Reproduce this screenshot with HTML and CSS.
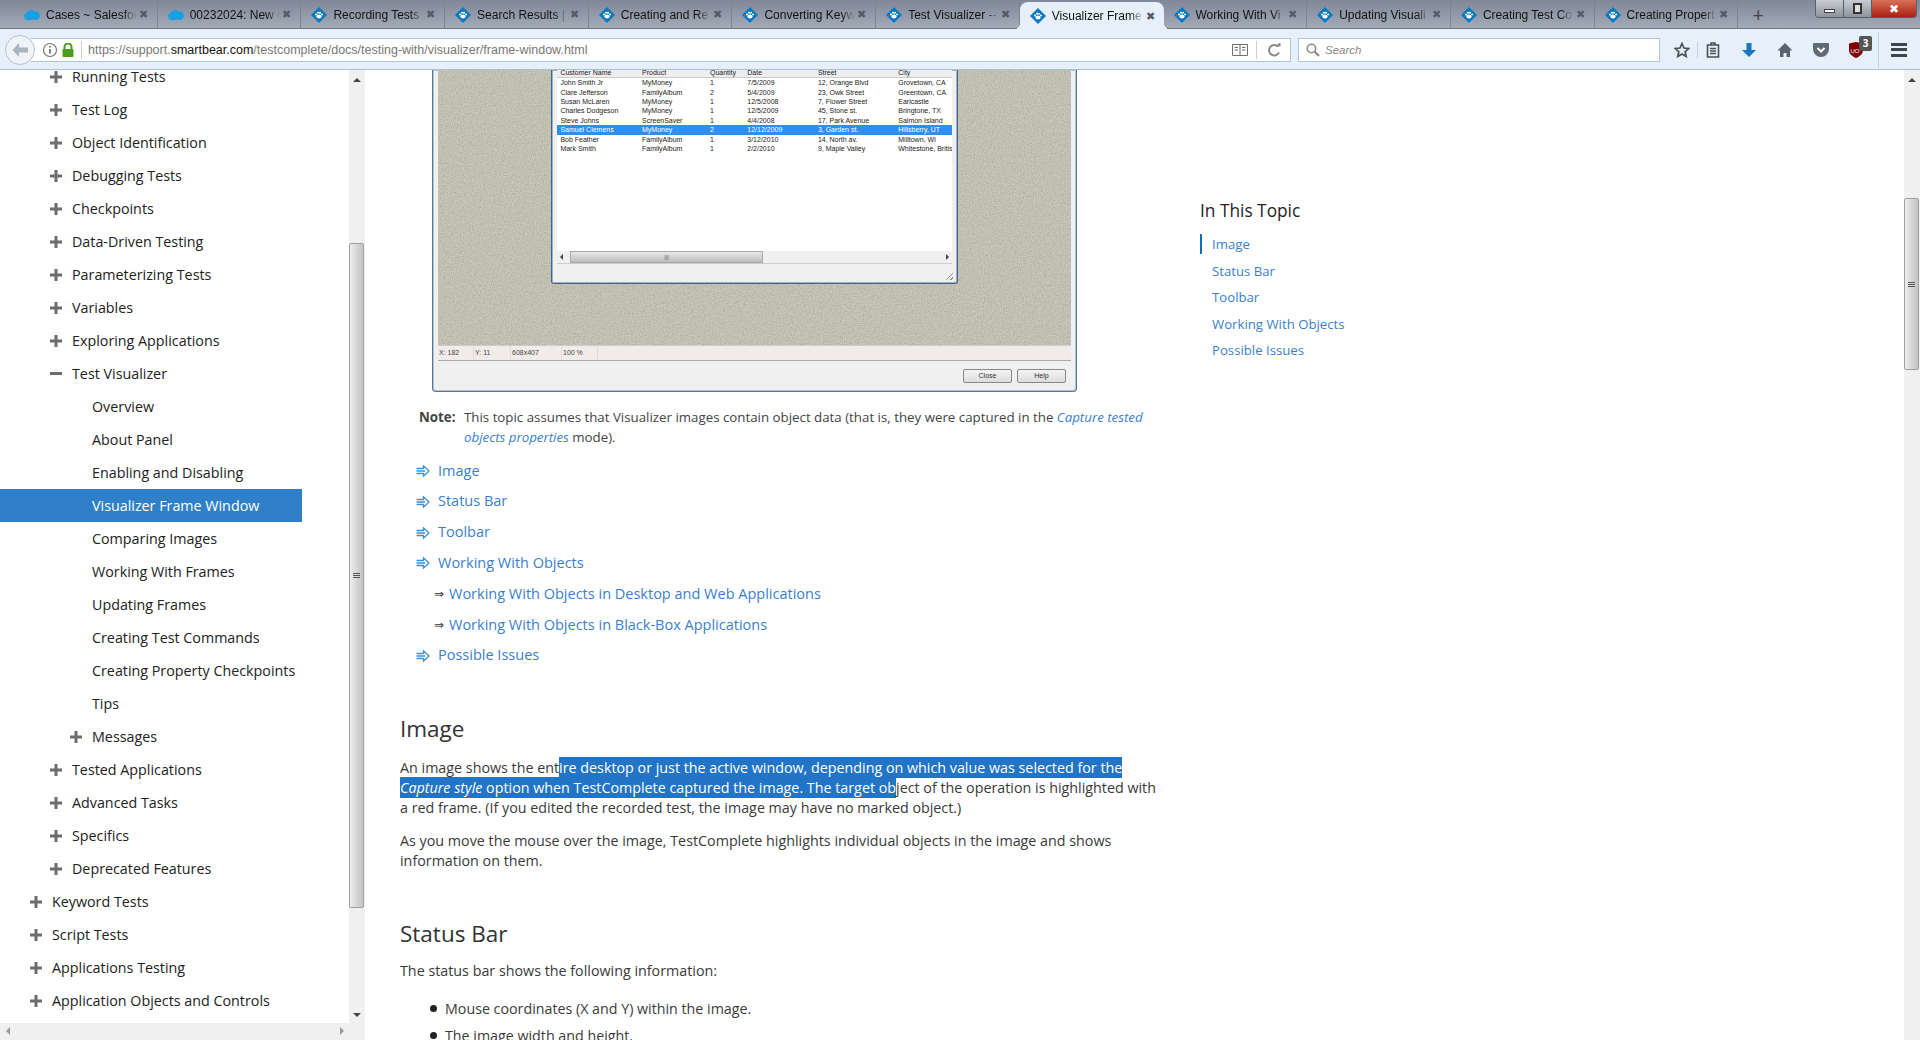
FILE: index.html

```html
<!DOCTYPE html>
<html lang="en">
<head>
    <meta charset="UTF-8">
    <title>Visualizer Frame Window</title>
    <link rel="stylesheet" href="styles.css">
</head>
<body>
<svg class="defs" width="0" height="0">
    <defs>
        <symbol id="bear" viewBox="0 0 16 16">
            <path d="M8 0L16 8L8 16L0 8Z" fill="#0b78c2"/>
            <ellipse cx="8" cy="9.6" rx="2.6" ry="2" fill="#fff"/>
            <circle cx="5" cy="7.6" r="1" fill="#fff"/>
            <circle cx="7" cy="5.8" r="1" fill="#fff"/>
            <circle cx="9" cy="5.8" r="1" fill="#fff"/>
            <circle cx="11" cy="7.6" r="1" fill="#fff"/>
        </symbol>
        <symbol id="cloud" viewBox="0 0 18 14">
            <path d="M5 13C1.5 13 0 11 0 8.5 0 6.5 1.5 5 3 4.6 4 2 6 1 8 1c2 0 3 .8 4 2 3.5-.8 6 1.5 6 4.5 0 3-2 5-5 5-1 0-2-.2-3-.6C9 12.8 7 13.2 5 13Z" fill="#1b9fe3"/>
        </symbol>
        <symbol id="plus" viewBox="0 0 12 12">
            <path d="M4.5 0h3v4.5H12v3H7.5V12h-3V7.5H0v-3h4.5Z" fill="#6d6d6d"/>
        </symbol>
        <symbol id="arrow" viewBox="0 0 14 12">
            <path d="M.5 3.5H7.5V.8L13 6 7.5 11.2V8.5H.5M.5 6H9" fill="none" stroke="#3f8fd2" stroke-width="1.3"/>
        </symbol>
    </defs>
</svg>

<header class="chrome">
    <div class="tabbar">
        <div class="tab"><svg class="fav cloud"><use href="#cloud"/></svg><span class="tab-title">Cases ~ Salesfor</span><span class="tab-x">&#10006;</span></div>
        <div class="tab"><svg class="fav cloud"><use href="#cloud"/></svg><span class="tab-title">00232024: New C</span><span class="tab-x">&#10006;</span></div>
        <div class="tab"><svg class="fav"><use href="#bear"/></svg><span class="tab-title">Recording Tests</span><span class="tab-x">&#10006;</span></div>
        <div class="tab"><svg class="fav"><use href="#bear"/></svg><span class="tab-title">Search Results |</span><span class="tab-x">&#10006;</span></div>
        <div class="tab"><svg class="fav"><use href="#bear"/></svg><span class="tab-title">Creating and Re</span><span class="tab-x">&#10006;</span></div>
        <div class="tab"><svg class="fav"><use href="#bear"/></svg><span class="tab-title">Converting Keyw</span><span class="tab-x">&#10006;</span></div>
        <div class="tab"><svg class="fav"><use href="#bear"/></svg><span class="tab-title">Test Visualizer --</span><span class="tab-x">&#10006;</span></div>
        <div class="tab tab-active"><svg class="fav"><use href="#bear"/></svg><span class="tab-title">Visualizer Frame</span><span class="tab-x">&#10006;</span></div>
        <div class="tab"><svg class="fav"><use href="#bear"/></svg><span class="tab-title">Working With Vi</span><span class="tab-x">&#10006;</span></div>
        <div class="tab"><svg class="fav"><use href="#bear"/></svg><span class="tab-title">Updating Visuali</span><span class="tab-x">&#10006;</span></div>
        <div class="tab"><svg class="fav"><use href="#bear"/></svg><span class="tab-title">Creating Test Co</span><span class="tab-x">&#10006;</span></div>
        <div class="tab"><svg class="fav"><use href="#bear"/></svg><span class="tab-title">Creating Propert</span><span class="tab-x">&#10006;</span></div>
        <div class="new-tab">+</div>
        <div class="win-buttons">
            <span class="win-btn win-min"><i></i></span>
            <span class="win-btn win-max"><i></i></span>
            <span class="win-btn win-close">&#10006;</span>
        </div>
    </div>
    <div class="navbar">
        <div class="back">
            <svg width="18" height="16" viewBox="0 0 18 16"><path d="M8 1L1.5 8 8 15V10.5H17V5.5H8Z" fill="#a9b4bf"/></svg>
        </div>
        <div class="urlbar">
            <svg class="info" width="16" height="16" viewBox="0 0 16 16"><circle cx="8" cy="8" r="6.5" fill="none" stroke="#777" stroke-width="1.2"/><path d="M8 7v4.5M8 4v1.6" stroke="#666" stroke-width="1.6"/></svg>
            <svg class="lock" width="12" height="14" viewBox="0 0 12 14"><path d="M2.5 6V4a3.5 3.5 0 0 1 7 0v2" fill="none" stroke="#4c9e1e" stroke-width="2"/><rect x=".5" y="6" width="11" height="8" rx="1" fill="#4c9e1e"/></svg>
            <span class="url">https://support.<b>smartbear.com</b>/testcomplete/docs/testing-with/visualizer/frame-window.html</span>
            <svg class="reader" width="16" height="12" viewBox="0 0 16 12"><path d="M.5.5h15v11h-15zM8 .5v11M2.5 3.5h3.5M2.5 6h3.5M10 3.5h3.5M10 6h3.5" fill="none" stroke="#6f6f6f"/></svg>
            <span class="url-sep"></span>
            <svg class="reload" width="14" height="14" viewBox="0 0 14 14"><path d="M12 9.5A5.2 5.2 0 1 1 11 3.5" fill="none" stroke="#8a8a8a" stroke-width="2"/><path d="M8 3.5h5.5V-1Z" fill="#8a8a8a"/></svg>
        </div>
        <div class="searchbar">
            <svg width="14" height="14" viewBox="0 0 14 14"><circle cx="5.5" cy="5.5" r="4.2" fill="none" stroke="#8a8a8a" stroke-width="1.6"/><path d="M8.5 8.5L13 13" stroke="#8a8a8a" stroke-width="2.2"/></svg>
            <span>Search</span>
        </div>
        <div class="nav-icons">
            <svg class="ic-star" width="16" height="16" viewBox="0 0 16 16"><path d="M8 1.5l2 4.5 4.8.5-3.6 3.2 1 4.8L8 12.1 3.8 14.5l1-4.8L1.2 6.5 6 6Z" fill="none" stroke="#4a4f55" stroke-width="1.7"/></svg>
            <span class="nav-sep"></span>
            <svg class="ic-clip" width="14" height="16" viewBox="0 0 14 16"><path d="M1.5 3h11v12h-11zM5 3V1h4v2M4 6.5h6M4 9h6M4 11.5h6" fill="none" stroke="#4a4f55" stroke-width="1.6"/></svg>
            <svg class="ic-down" width="16" height="16" viewBox="0 0 16 16"><path d="M5.5 1h5v7H15l-7 7-7-7h4.5Z" fill="#1a76bd"/></svg>
            <svg class="ic-home" width="16" height="16" viewBox="0 0 16 16"><path d="M8 1L.5 8.5H3V15h3.5v-4h3v4H13V8.5h2.5Z" fill="#5a636b"/></svg>
            <svg class="ic-pocket" width="16" height="14" viewBox="0 0 16 14"><path d="M1 0h14a1 1 0 0 1 1 1v5a8 8 0 0 1-16 0V1a1 1 0 0 1 1-1Z" fill="#5f6b75"/><path d="M4.5 5L8 8.5 11.5 5" fill="none" stroke="#fff" stroke-width="2"/></svg>
            <span class="ublock">
                <svg width="14" height="16" viewBox="0 0 14 16"><path d="M0 1.5L7 0l7 1.5V8c0 4-3.5 6.5-7 8-3.5-1.5-7-4-7-8Z" fill="#800000"/><text x="1.5" y="10.5" font-size="6" font-family="Liberation Sans" fill="#fff">UO</text></svg>
                <span class="ub-badge">3</span>
            </span>
            <span class="nav-sep-tall"></span>
            <span class="burger"><i></i><i></i><i></i></span>
        </div>
    </div>
</header>

<div class="page">
    <nav class="sidebar">
        <ul class="tree">
            <li class="lvl1"><svg class="tg"><use href="#plus"/></svg>Running Tests</li>
            <li class="lvl1"><svg class="tg"><use href="#plus"/></svg>Test Log</li>
            <li class="lvl1"><svg class="tg"><use href="#plus"/></svg>Object Identification</li>
            <li class="lvl1"><svg class="tg"><use href="#plus"/></svg>Debugging Tests</li>
            <li class="lvl1"><svg class="tg"><use href="#plus"/></svg>Checkpoints</li>
            <li class="lvl1"><svg class="tg"><use href="#plus"/></svg>Data-Driven Testing</li>
            <li class="lvl1"><svg class="tg"><use href="#plus"/></svg>Parameterizing Tests</li>
            <li class="lvl1"><svg class="tg"><use href="#plus"/></svg>Variables</li>
            <li class="lvl1"><svg class="tg"><use href="#plus"/></svg>Exploring Applications</li>
            <li class="lvl1"><span class="tg minus"></span>Test Visualizer</li>
            <li class="lvl2">Overview</li>
            <li class="lvl2">About Panel</li>
            <li class="lvl2">Enabling and Disabling</li>
            <li class="lvl2 selected">Visualizer Frame Window</li>
            <li class="lvl2">Comparing Images</li>
            <li class="lvl2">Working With Frames</li>
            <li class="lvl2">Updating Frames</li>
            <li class="lvl2">Creating Test Commands</li>
            <li class="lvl2">Creating Property Checkpoints</li>
            <li class="lvl2">Tips</li>
            <li class="lvl2 has-toggle"><svg class="tg"><use href="#plus"/></svg>Messages</li>
            <li class="lvl1"><svg class="tg"><use href="#plus"/></svg>Tested Applications</li>
            <li class="lvl1"><svg class="tg"><use href="#plus"/></svg>Advanced Tasks</li>
            <li class="lvl1"><svg class="tg"><use href="#plus"/></svg>Specifics</li>
            <li class="lvl1"><svg class="tg"><use href="#plus"/></svg>Deprecated Features</li>
            <li class="lvl0"><svg class="tg"><use href="#plus"/></svg>Keyword Tests</li>
            <li class="lvl0"><svg class="tg"><use href="#plus"/></svg>Script Tests</li>
            <li class="lvl0"><svg class="tg"><use href="#plus"/></svg>Applications Testing</li>
            <li class="lvl0"><svg class="tg"><use href="#plus"/></svg>Application Objects and Controls</li>
        </ul>
        <div class="side-vscroll">
            <span class="arrow-up"></span>
            <span class="side-thumb"><i></i><i></i><i></i></span>
            <span class="arrow-down"></span>
        </div>
        <div class="side-hscroll">
            <span class="arrow-left"></span>
            <span class="arrow-right"></span>
        </div>
    </nav>

    <main class="content">
        <div class="shot">
            <div class="shot-canvas">
                <svg class="noise" width="100%" height="100%">
                    <filter id="grain"><feTurbulence type="fractalNoise" baseFrequency="0.9" numOctaves="2" seed="4"/><feColorMatrix values="0 0 0 0 0.38  0 0 0 0 0.37  0 0 0 0 0.32  0 0 0 1.6 -0.55"/></filter>
                    <rect width="100%" height="100%" filter="url(#grain)"/>
                </svg>
                <div class="shot-win">
                    <div class="shot-list">
                        <div class="shot-row shot-head"><span>Customer Name</span><span>Product</span><span>Quantity</span><span>Date</span><span>Street</span><span>City</span></div>
                        <div class="shot-row"><span>John Smith Jr</span><span>MyMoney</span><span>1</span><span>7/5/2009</span><span>12, Orange Blvd</span><span>Grovetown, CA</span></div>
                        <div class="shot-row"><span>Clare Jefferson</span><span>FamilyAlbum</span><span>2</span><span>5/4/2009</span><span>23, Owk Street</span><span>Greentown, CA</span></div>
                        <div class="shot-row"><span>Susan McLaren</span><span>MyMoney</span><span>1</span><span>12/5/2008</span><span>7, Flower Street</span><span>Earlcastle</span></div>
                        <div class="shot-row"><span>Charles Dodgeson</span><span>MyMoney</span><span>1</span><span>12/5/2009</span><span>45, Stone st.</span><span>Bringtone, TX</span></div>
                        <div class="shot-row"><span>Steve Johns</span><span>ScreenSaver</span><span>1</span><span>4/4/2008</span><span>17, Park Avenue</span><span>Salmon Island</span></div>
                        <div class="shot-row shot-sel"><span>Samuel Clemens</span><span>MyMoney</span><span>2</span><span>12/12/2009</span><span>3, Garden st.</span><span>Hillsberry, UT</span></div>
                        <div class="shot-row"><span>Bob Feather</span><span>FamilyAlbum</span><span>1</span><span>3/12/2010</span><span>14, North av.</span><span>Milltown, WI</span></div>
                        <div class="shot-row"><span>Mark Smith</span><span>FamilyAlbum</span><span>1</span><span>2/2/2010</span><span>9, Maple Valley</span><span>Whitestone, Britis</span></div>
                    </div>
                    <div class="shot-hscroll"><span class="shot-l"></span><span class="shot-thumb">|||</span><span class="shot-r"></span></div>
                    <div class="shot-grip"></div>
                </div>
            </div>
            <div class="shot-status"><span class="st1">X: 182</span><span class="st2">Y: 11</span><span class="st3">608x407</span><span class="st4">100 %</span><span class="st5"></span></div>
            <div class="shot-buttons"><span class="shot-btn">Close</span><span class="shot-btn">Help</span></div>
        </div>

        <div class="note">
            <b class="note-label">Note:</b>
            <p>This topic assumes that Visualizer images contain object data (that is, they were captured in the <a><i>Capture tested objects properties</i></a> mode).</p>
        </div>

        <ul class="toc">
            <li><svg class="toc-arrow"><use href="#arrow"/></svg><a>Image</a></li>
            <li><svg class="toc-arrow"><use href="#arrow"/></svg><a>Status Bar</a></li>
            <li><svg class="toc-arrow"><use href="#arrow"/></svg><a>Toolbar</a></li>
            <li><svg class="toc-arrow"><use href="#arrow"/></svg><a>Working With Objects</a></li>
            <li class="toc-sub"><span class="dbl">&#8658;</span><a>Working With Objects in Desktop and Web Applications</a></li>
            <li class="toc-sub"><span class="dbl">&#8658;</span><a>Working With Objects in Black-Box Applications</a></li>
            <li><svg class="toc-arrow"><use href="#arrow"/></svg><a>Possible Issues</a></li>
        </ul>

        <h2 class="heading h-image">Image</h2>
        <p class="para first">An image shows the ent<span class="hl">ire desktop or just the active window, depending on which value was selected for the <i>Capture style</i> option when TestComplete captured the image. The target ob</span>ject of the operation is highlighted with a red frame. (If you edited the recorded test, the image may have no marked object.)</p>
        <p class="para">As you move the mouse over the image, TestComplete highlights individual objects in the image and shows information on them.</p>

        <h2 class="heading h-status">Status Bar</h2>
        <p class="para">The status bar shows the following information:</p>
        <ul class="bullets">
            <li>Mouse coordinates (X and Y) within the image.</li>
            <li>The image width and height.</li>
        </ul>
    </main>

    <aside class="topic">
        <h3>In This Topic</h3>
        <ul>
            <li class="on">Image</li>
            <li>Status Bar</li>
            <li>Toolbar</li>
            <li>Working With Objects</li>
            <li>Possible Issues</li>
        </ul>
    </aside>

    <div class="page-scroll">
        <span class="arrow-up"></span>
        <span class="page-thumb"><i></i><i></i><i></i></span>
    </div>
</div>
</body>
</html>
```

FILE: styles.css

```css
* {
    box-sizing: border-box;
}

html, body {
    margin: 0;
    height: 100%;
    overflow: hidden;
}

body {
    font-family: "Open Sans", "Noto Sans", Arial, sans-serif;
    font-size: 14px;
    color: #333;
    background: #fff;
}

.defs {
    position: absolute;
}

ul {
    list-style: none;
    margin: 0;
    padding: 0;
}

/* browser chrome */

.chrome {
    height: 70px;
    display: flex;
    flex-direction: column;
}

.tabbar {
    height: 29px;
    flex-shrink: 0;
    display: flex;
    padding-left: 14px;
    background: linear-gradient(#7f8798, #a3abb8);
    border-bottom: 1px solid #6f7783;
    position: relative;
}

.tab {
    width: 143.7px;
    height: 29px;
    padding: 0 9px 0 10px;
    display: flex;
    align-items: center;
    font-family: "Liberation Sans", Arial, sans-serif;
    font-size: 12px;
    color: #111;
    border-right: 1px solid #7d8592;
    flex-shrink: 0;
    position: relative;
}

.tab-active {
    background: #e6f0fa;
    border-radius: 8px 8px 0 0;
    border-right: 0;
    margin-top: 2px;
    height: 28px;
}

.tab-active::before, .tab-active::after {
    content: "";
    position: absolute;
    bottom: 0;
    width: 8px;
    height: 8px;
}

.tab-active::before {
    left: -8px;
    background: radial-gradient(circle at 0 0, transparent 8px, #e6f0fa 8.5px);
}

.tab-active::after {
    right: -8px;
    background: radial-gradient(circle at 100% 0, transparent 8px, #e6f0fa 8.5px);
}

.fav {
    width: 16px;
    height: 16px;
    flex-shrink: 0;
    margin-right: 6px;
}

.tab-title {
    flex: 1;
    overflow: hidden;
    white-space: nowrap;
    -webkit-mask-image: linear-gradient(to right, #000 85%, transparent 100%);
    mask-image: linear-gradient(to right, #000 85%, transparent 100%);
}

.tab-x {
    font-size: 11px;
    color: #555b66;
    margin-left: 2px;
    flex-shrink: 0;
}

.new-tab {
    width: 40px;
    text-align: center;
    font-size: 20px;
    line-height: 29px;
    color: #444;
}

.win-buttons {
    position: absolute;
    top: 0;
    left: 1815px;
    width: 102px;
    height: 18px;
    display: flex;
    border: 1px solid #5b6068;
    border-top: 0;
    border-radius: 0 0 4px 4px;
    overflow: hidden;
}

.win-btn {
    width: 28px;
    display: flex;
    align-items: center;
    justify-content: center;
    background: linear-gradient(#c9cdd3, #8d939c);
    border-right: 1px solid #5b6068;
}

.win-min i {
    width: 11px;
    height: 4px;
    margin-top: 5px;
    background: #fff;
    border: 1px solid #444;
}

.win-max i {
    width: 9px;
    height: 11px;
    border: 2px solid #333;
    background: #ddd;
}

.win-close {
    flex: 1;
    border: 0;
    color: #fff;
    font-size: 12px;
    background: linear-gradient(#d9705a, #a82010);
}

.navbar {
    height: 41px;
    flex-shrink: 0;
    display: flex;
    align-items: center;
    background: #e6f0fa;
    border-bottom: 1px solid #a9bfd6;
    padding-left: 5px;
    padding-top: 1px;
}

.back {
    width: 30px;
    height: 30px;
    border-radius: 50%;
    border: 1px solid #b3c0cd;
    background: #eef3f8;
    display: flex;
    align-items: center;
    justify-content: center;
    z-index: 1;
    flex-shrink: 0;
}

.urlbar {
    margin-left: -4px;
    width: 1260px;
    height: 24px;
    background: #fff;
    border: 1px solid #b4c4d6;
    border-left: 0;
    display: flex;
    align-items: center;
    padding-left: 11px;
    flex-shrink: 0;
}

.lock {
    margin: 0 7px 0 4px;
}

.url {
    flex: 1;
    padding-left: 6px;
    border-left: 1px solid #ccd;
    font-family: "Liberation Sans", Arial, sans-serif;
    font-size: 12.5px;
    color: #777;
    line-height: 18px;
}

.url b {
    font-weight: normal;
    color: #111;
}

.reader {
    margin-right: 8px;
}

.url-sep {
    width: 1px;
    height: 18px;
    background: #ccd;
    margin-right: 10px;
}

.reload {
    margin-right: 9px;
}

.searchbar {
    margin-left: 7px;
    width: 362px;
    height: 24px;
    background: #fff;
    border: 1px solid #b4c4d6;
    display: flex;
    align-items: center;
    gap: 5px;
    padding-left: 7px;
    font-family: "Liberation Sans", Arial, sans-serif;
    font-size: 11.5px;
    font-style: italic;
    color: #888;
    flex-shrink: 0;
}

.nav-icons {
    flex: 1;
    display: flex;
    align-items: center;
    padding-left: 14px;
}

.nav-sep {
    width: 1px;
    height: 16px;
    background: #c4d0dc;
    margin: 0 8px 0 7px;
}

.ic-down {
    margin-left: 21px;
}

.ic-home, .ic-pocket, .ublock {
    margin-left: 20px;
}

.ublock {
    position: relative;
    display: flex;
}

.ub-badge {
    position: absolute;
    left: 10px;
    top: -6px;
    width: 13px;
    height: 15px;
    background: #555;
    color: #fff;
    border-radius: 2px;
    font-size: 10px;
    font-weight: bold;
    text-align: center;
    line-height: 15px;
}

.nav-sep-tall {
    width: 1px;
    height: 36px;
    background: #c4d0dc;
    margin: 0 12px 0 15px;
}

.burger {
    width: 16px;
    display: flex;
    flex-direction: column;
    gap: 2.5px;
}

.burger i {
    height: 3px;
    background: #3e444c;
}

/* page body */

.page {
    height: 970px;
    display: flex;
    position: relative;
    overflow: hidden;
}

/* left tree */

.sidebar {
    width: 365px;
    flex-shrink: 0;
    position: relative;
    overflow: hidden;
}

.tree {
    margin-top: -10px;
    width: 349px;
}

.tree li {
    height: 33px;
    line-height: 33px;
    font-size: 14.3px;
    color: #222;
    white-space: nowrap;
    display: flex;
    align-items: center;
}

.tg {
    width: 12px;
    height: 12px;
    flex-shrink: 0;
    margin-right: 10px;
}

.minus {
    display: flex;
    align-items: center;
}

.minus::before {
    content: "";
    display: block;
    width: 12px;
    height: 3px;
    background: #6d6d6d;
}

.lvl0 {
    padding-left: 30px;
}

.lvl1 {
    padding-left: 50px;
}

.lvl2 {
    padding-left: 92px;
    width: 302px;
}

.tree .has-toggle {
    padding-left: 70px;
}

.tree .selected {
    background: #2f80c8;
    color: #fff;
}

.side-vscroll {
    position: absolute;
    top: 0;
    right: 0;
    width: 16px;
    height: 953px;
    background: #f0f0f0;
}

.side-thumb {
    position: absolute;
    top: 173px;
    left: 0;
    width: 15px;
    height: 665px;
    background: linear-gradient(to right, #eee, #d6d6d6 50%, #c4c4c4);
    border: 1px solid #a0a0a0;
    border-radius: 2px;
    display: flex;
    flex-direction: column;
    align-items: center;
    justify-content: center;
    gap: 1px;
}

.side-thumb i, .page-thumb i {
    width: 7px;
    height: 1px;
    background: #555;
}

.arrow-up, .arrow-down {
    position: absolute;
    left: 4px;
    width: 0;
    height: 0;
    border-left: 4px solid transparent;
    border-right: 4px solid transparent;
}

.arrow-up {
    top: 8px;
    border-bottom: 4px solid #444;
}

.arrow-down {
    bottom: 6px;
    border-top: 4px solid #444;
}

.side-hscroll {
    position: absolute;
    left: 0;
    bottom: 0;
    width: 365px;
    height: 17px;
    background: #f0f0f0;
}

.arrow-left, .arrow-right {
    position: absolute;
    top: 4px;
    width: 0;
    height: 0;
    border-top: 4px solid transparent;
    border-bottom: 4px solid transparent;
}

.arrow-left {
    left: 6px;
    border-right: 4px solid #999;
}

.arrow-right {
    right: 21px;
    border-left: 4px solid #999;
}

/* centre column */

.content {
    width: 800px;
    padding-left: 35px;
    flex-shrink: 0;
    overflow: hidden;
}

.shot {
    margin-left: 32px;
    width: 645px;
    height: 322px;
    background: #f0f0f0;
    border: 1px solid #5f7488;
    border-top: 0;
    border-radius: 0 0 4px 4px;
    box-shadow: inset 0 0 0 1px #a9c6e4;
    display: flex;
    flex-direction: column;
    padding: 0 5px;
    font-family: "Liberation Sans", Arial, sans-serif;
}

.shot-canvas {
    height: 275px;
    flex-shrink: 0;
    background: #cbc8bb;
    position: relative;
    overflow: hidden;
}

.noise {
    position: absolute;
    left: 0;
    top: 0;
}

.shot-win {
    position: relative;
    margin-left: 113px;
    width: 407px;
    height: 214px;
    background: #f0f0f0;
    border: 1px solid #4f6273;
    border-top: 0;
    border-radius: 0 0 3px 3px;
    box-shadow: inset 0 0 0 1px #8db6de;
    padding: 0 5px;
}

.shot-list {
    height: 181px;
    background: #fff;
}

.shot-row {
    display: grid;
    grid-template-columns: 81.6px 68px 37.3px 70.6px 80.4px 1fr;
    height: 9.38px;
    line-height: 9.38px;
    font-size: 7px;
    color: #222;
    white-space: nowrap;
    overflow: hidden;
    padding-left: 3.4px;
}

.shot-head {
    height: 8px;
    line-height: 6px;
    background: #eee;
    border-bottom: 1px solid #ccc;
    margin-bottom: .3px;
}

.shot-sel {
    background: #2f8ef0;
    color: #fff;
}

.shot-hscroll {
    height: 13px;
    background: #f0f0f0;
    position: relative;
    border-bottom: 1px solid #ccc;
}

.shot-l, .shot-r {
    position: absolute;
    top: 3px;
    width: 0;
    height: 0;
    border-top: 3px solid transparent;
    border-bottom: 3px solid transparent;
}

.shot-l {
    left: 3px;
    border-right: 3px solid #444;
}

.shot-r {
    right: 3px;
    border-left: 3px solid #444;
}

.shot-thumb {
    position: absolute;
    left: 13px;
    top: 0;
    width: 193px;
    height: 12px;
    background: linear-gradient(#e8e8e8, #bdbdbd);
    border: 1px solid #aaa;
    font-size: 6px;
    line-height: 10px;
    text-align: center;
    color: #555;
}

.shot-grip {
    position: absolute;
    right: 4px;
    bottom: 3px;
    width: 8px;
    height: 8px;
    background: repeating-linear-gradient(135deg, #999 0 1px, transparent 1px 3px);
    clip-path: polygon(100% 0, 100% 100%, 0 100%);
}

.shot-status {
    height: 16px;
    flex-shrink: 0;
    display: flex;
    align-items: center;
    font-size: 7px;
    color: #444;
    background: #f1ece9;
    border-top: 1px solid #ccc;
    border-bottom: 1px solid #aaa;
}

.shot-status span {
    border-right: 1px solid #ddd;
    line-height: 14px;
    padding-left: 1px;
}

.st1 { width: 36px; }
.st2 { width: 37px; }
.st3 { width: 51px; }
.st4 { width: 36px; }
.st5 { width: 43px; }

.shot-buttons {
    flex: 1;
    display: flex;
    justify-content: flex-end;
    align-items: center;
    gap: 5px;
    padding-right: 5px;
}

.shot-btn {
    width: 49px;
    height: 14px;
    border: 1px solid #888;
    border-radius: 2px;
    background: linear-gradient(#f4f4f4, #dcdcdc);
    font-size: 7px;
    line-height: 12px;
    text-align: center;
    color: #333;
}

.note {
    display: flex;
    margin: 16px 0 0 19px;
    font-size: 13.3px;
    line-height: 19.6px;
    color: #444;
}

.note-label {
    width: 45px;
    flex-shrink: 0;
    font-weight: 700;
}

.note p {
    margin: 0;
    width: 690px;
}

a {
    color: #3a7fcc;
    text-decoration: none;
}

.toc {
    margin: 8.5px 0 0 16px;
    font-size: 14.5px;
}

.toc li {
    height: 30.8px;
    line-height: 30.8px;
    display: flex;
    align-items: center;
}

.toc-arrow {
    width: 14px;
    height: 12px;
    margin-right: 8px;
}

.toc-sub {
    padding-left: 18px;
}

.dbl {
    width: 15px;
    color: #333;
    font-size: 12px;
}

.heading {
    font-size: 22.5px;
    font-weight: 400;
    color: #333;
    line-height: 30px;
    margin: 0;
}

.h-image {
    margin-top: 43px;
}

.h-status {
    margin-top: 48px;
}

.para {
    margin: 12px 0 0;
    width: 765px;
    font-size: 14.3px;
    line-height: 20.3px;
    color: #3a3a3a;
}

.first {
    margin-top: 13.5px;
}

.hl {
    background: #2275c6;
    color: #fff;
    padding: 1px 0;
}

.bullets {
    margin: 17px 0 0 45px;
    font-size: 14.25px;
    color: #3a3a3a;
}

.bullets li {
    line-height: 20px;
    margin-bottom: 7px;
    position: relative;
}

.bullets li::before {
    content: "";
    position: absolute;
    left: -15px;
    top: 6px;
    width: 7px;
    height: 7px;
    border-radius: 50%;
    background: #222;
}

/* right column */

.topic {
    flex: 1;
    padding: 129px 0 0 35px;
}

.topic h3 {
    margin: 0 0 11px;
    font-size: 17.3px;
    font-weight: 400;
    line-height: 24px;
    color: #222;
}

.topic li {
    height: 26.3px;
    line-height: 26.3px;
    padding-left: 12px;
    font-size: 13.2px;
    color: #3a7fcc;
}

.topic .on {
    border-left: 2px solid #0a6ebd;
    padding-left: 10px;
    height: 20px;
    line-height: 20px;
    margin: 3px 0 4px;
}

.page-scroll {
    width: 16px;
    position: relative;
    background: #f0f0f0;
    flex-shrink: 0;
}

.page-thumb {
    position: absolute;
    top: 128px;
    left: 0;
    width: 15px;
    height: 172px;
    background: linear-gradient(to right, #eee, #d6d6d6 50%, #c4c4c4);
    border: 1px solid #a0a0a0;
    border-radius: 2px;
    display: flex;
    flex-direction: column;
    align-items: center;
    justify-content: center;
    gap: 1px;
}
```
